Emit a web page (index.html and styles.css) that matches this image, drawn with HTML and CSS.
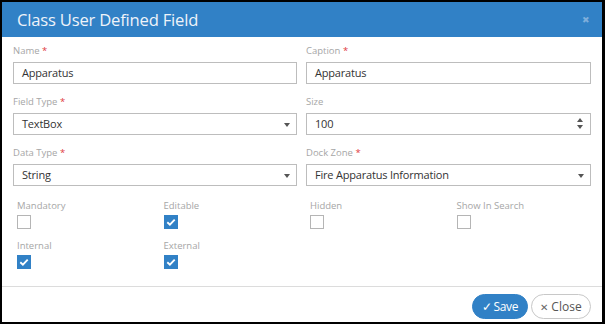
FILE: index.html
```
<!DOCTYPE html>
<html lang="en">
  <head>
    <meta charset="UTF-8" />
    <title>Class User Defined Field</title>
    <link rel="stylesheet" href="styles.css">
  </head>
  <body>
    <div class="modal">
      <div class="modal-header">
        <h1>Class User Defined Field</h1>
        <span class="close-x">&#x2716;</span>
      </div>

      <div class="modal-body">
        <div class="fields">
          <div class="field">
            <label>Name <span class="req">*</span></label>
            <div class="input">Apparatus</div>
          </div>
          <div class="field">
            <label>Caption <span class="req">*</span></label>
            <div class="input">Apparatus</div>
          </div>
          <div class="field">
            <label>Field Type <span class="req">*</span></label>
            <div class="input select">TextBox<span class="caret"></span></div>
          </div>
          <div class="field">
            <label>Size</label>
            <div class="input">100
              <span class="spinner"><span class="up"></span><span class="down"></span></span>
            </div>
          </div>
          <div class="field">
            <label>Data Type <span class="req">*</span></label>
            <div class="input select">String<span class="caret"></span></div>
          </div>
          <div class="field">
            <label>Dock Zone <span class="req">*</span></label>
            <div class="input select">Fire Apparatus Information<span class="caret"></span></div>
          </div>
        </div>

        <div class="checks">
          <div class="check">
            <label>Mandatory</label>
            <span class="box"></span>
          </div>
          <div class="check">
            <label>Editable</label>
            <span class="box checked"><svg viewBox="0 0 13 13"><path d="M2.5 6.8l2.8 2.6 5.2-5.6" /></svg></span>
          </div>
          <div class="check">
            <label>Hidden</label>
            <span class="box"></span>
          </div>
          <div class="check">
            <label>Show In Search</label>
            <span class="box"></span>
          </div>
          <div class="check">
            <label>Internal</label>
            <span class="box checked"><svg viewBox="0 0 13 13"><path d="M2.5 6.8l2.8 2.6 5.2-5.6" /></svg></span>
          </div>
          <div class="check">
            <label>External</label>
            <span class="box checked"><svg viewBox="0 0 13 13"><path d="M2.5 6.8l2.8 2.6 5.2-5.6" /></svg></span>
          </div>
        </div>
      </div>

      <div class="modal-footer">
        <button class="btn btn-save"><span class="tick">&#x2713;</span>Save</button>
        <button class="btn btn-close"><span class="cross">&#x2715;</span>Close</button>
      </div>
    </div>
  </body>
</html>
```

FILE: styles.css
```
* {
  margin: 0;
  padding: 0;
  box-sizing: border-box;
  font-family: "Open Sans", sans-serif;
}
body {
  background-color: #000;
  height: 324px;
  overflow: hidden;
}
.modal {
  margin: 2px 3px 0 2px;
  height: 320px;
  background-color: #fff;
  display: flex;
  flex-direction: column;
}
.modal-header {
  height: 35px;
  background-color: #3181c6;
  display: flex;
  align-items: center;
  justify-content: space-between;
  padding: 0 12px 0 15px;
}
.modal-header h1 {
  font-size: 16.6px;
  font-weight: 400;
  color: #eef3f9;
  letter-spacing: -0.2px;
}
.close-x {
  color: #7eaedb;
  font-size: 9px;
}
.modal-body {
  flex: 1;
  padding: 7px 11px 0 11px;
}
.fields {
  display: grid;
  grid-template-columns: 284px 285px;
  column-gap: 9px;
  row-gap: 11px;
}
.field label,
.check label {
  display: block;
  font-size: 9.5px;
  line-height: 13px;
  color: #a6a6a6;
  margin-bottom: 5px;
}
.req {
  color: #e0393e;
}
.input {
  position: relative;
  height: 22px;
  border: 1px solid #bdbdbd;
  font-size: 11px;
  letter-spacing: -0.2px;
  line-height: 20px;
  color: #333;
  padding-left: 8px;
}
.caret {
  position: absolute;
  right: 6px;
  top: 9px;
  border-left: 3.5px solid transparent;
  border-right: 3.5px solid transparent;
  border-top: 4px solid #555;
}
.spinner {
  position: absolute;
  right: 7px;
  top: 4px;
  display: flex;
  flex-direction: column;
  gap: 3px;
}
.spinner .up {
  border-left: 3.5px solid transparent;
  border-right: 3.5px solid transparent;
  border-bottom: 4px solid #555;
}
.spinner .down {
  border-left: 3.5px solid transparent;
  border-right: 3.5px solid transparent;
  border-top: 4px solid #555;
}
.checks {
  display: grid;
  grid-template-columns: repeat(4, 146.5px);
  row-gap: 10px;
  padding: 13px 0 0 4px;
}
.check label {
  margin-bottom: 3px;
}
.box {
  display: block;
  width: 14px;
  height: 14px;
  border: 1px solid #b5b5b5;
}
.box.checked {
  background-color: #3181c6;
  border-color: #3181c6;
}
.box svg {
  display: block;
  width: 12px;
  height: 12px;
  fill: none;
  stroke: #fff;
  stroke-width: 2;
}
.modal-footer {
  height: 36px;
  border-top: 1px solid #dcdcdc;
  display: flex;
  justify-content: flex-end;
  align-items: flex-start;
  gap: 3px;
  padding: 7px 11px 0 0;
}
.btn {
  height: 25px;
  border-radius: 13px;
  font-size: 12px;
  cursor: pointer;
  display: flex;
  align-items: center;
  justify-content: center;
}
.btn-save {
  width: 56px;
  background-color: #3181c6;
  border: 1px solid #3181c6;
  color: #fff;
  letter-spacing: -0.3px;
}
.btn-close {
  width: 60px;
  background-color: #fff;
  border: 1px solid #c8c8c8;
  color: #555;
}
.tick {
  font-size: 12px;
  margin-right: 2px;
}
.cross {
  font-size: 10px;
  margin-right: 3px;
  color: #666;
}
```
